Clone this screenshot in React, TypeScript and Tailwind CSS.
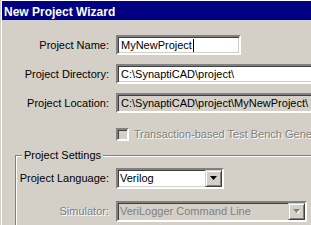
import React from "react"

const font = { fontFamily: '"Liberation Sans", Arial, sans-serif' }

const sunken =
  "border-2 border-t-[#808080] border-l-[#808080] border-b-white border-r-white shadow-[inset_1px_1px_0_#404040,inset_-1px_-1px_0_#d4d0c8]"

const raised =
  "border border-t-[#d4d0c8] border-l-[#d4d0c8] border-b-[#404040] border-r-[#404040] shadow-[inset_1px_1px_0_#ffffff,inset_-1px_-1px_0_#808080]"

function Label({
  children,
  disabled,
  width = "w-[114px]",
}: {
  children: React.ReactNode
  disabled?: boolean
  width?: string
}) {
  return (
    <div
      className={`${width} shrink-0 whitespace-nowrap pr-[7px] text-right text-[11px] leading-none ${
        disabled ? "text-[#808080] [text-shadow:1px_1px_0_#ffffff]" : "text-black"
      }`}
    >
      {children}
    </div>
  )
}

function Arrow({ disabled }: { disabled?: boolean }) {
  return (
    <svg width="8" height="5" viewBox="0 0 8 5" className="block">
      {disabled && <path d="M1 1h7l-3.5 4z" fill="#ffffff" />}
      <path d="M0 0h7l-3.5 4z" fill={disabled ? "#808080" : "#000000"} />
    </svg>
  )
}

function Select({ value, width, disabled }: { value: string; width: string; disabled?: boolean }) {
  return (
    <div
      className={`${sunken} ${width} flex h-[21px] shrink-0 items-center ${disabled ? "bg-[#d4d0c8]" : "bg-white"}`}
    >
      <span
        className={`flex-1 whitespace-nowrap pl-[2px] text-[11px] leading-none ${
          disabled ? "text-[#808080]" : "text-black"
        }`}
      >
        {value}
      </span>
      <div className={`${raised} flex h-[17px] w-[17px] items-center justify-center bg-[#d4d0c8]`}>
        <Arrow disabled={disabled} />
      </div>
    </div>
  )
}

export default function App() {
  return (
    <div className="h-[225px] w-[311px] overflow-hidden bg-[#d4d0c8] pl-px" style={font}>
      <div className="h-full border-l border-t border-white">
        <div className="flex h-[19px] items-center bg-[#000080] pl-[2px] pt-[2px] text-[12px] font-bold text-white">
          New Project Wizard
        </div>

        <div className="flex flex-col pt-[15px]">
          <div className="flex items-center">
            <Label>Project Name:</Label>
            <div className={`${sunken} flex h-[20px] w-[125px] shrink-0 items-center bg-white pl-[3px] text-[11px] leading-none`}>
              MyNewProject
              <span className="ml-px inline-block h-[13px] w-px bg-black" />
            </div>
          </div>

          <div className="mt-[9px] flex items-center">
            <Label>Project Directory:</Label>
            <div className={`${sunken} flex h-[20px] w-[220px] shrink-0 items-center whitespace-nowrap bg-white pl-[3px] text-[11px] leading-none`}>
              C:\SynaptiCAD\project\
            </div>
          </div>

          <div className="mt-[9px] flex items-center">
            <Label>Project Location:</Label>
            <div className={`${sunken} flex h-[20px] w-[220px] shrink-0 items-center whitespace-nowrap bg-[#d4d0c8] pl-[3px] text-[11px] leading-none`}>
              C:\SynaptiCAD\project\MyNewProject\
            </div>
          </div>

          <div className="mt-[15px] flex items-center whitespace-nowrap pl-[114px]">
            <div className={`${sunken} h-[13px] w-[13px] shrink-0 bg-[#d4d0c8]`} />
            <span className="pl-[5px] text-[11px] leading-none text-[#808080] [text-shadow:1px_1px_0_#ffffff]">
              Transaction-based Test Bench Gener
            </span>
          </div>

          <div className="ml-[13px] mt-[14px] h-[120px] w-[320px] shrink-0 border border-b-white border-l-[#808080] border-r-white border-t-[#808080] shadow-[inset_1px_1px_0_#ffffff]">
            <div className="-mt-[7px] ml-[6px] w-fit whitespace-nowrap bg-[#d4d0c8] px-[2px] text-[11px] leading-[13px] text-black">
              Project Settings
            </div>
            <div className="mt-[6px] flex items-center">
              <Label width="w-[100px]">Project Language:</Label>
              <Select value="Verilog" width="w-[108px]" />
            </div>
            <div className="mt-[12px] flex items-center">
              <Label width="w-[100px]" disabled>
                Simulator:
              </Label>
              <Select value="VeriLogger Command Line" width="w-[191px]" disabled />
            </div>
          </div>
        </div>
      </div>
    </div>
  )
}
